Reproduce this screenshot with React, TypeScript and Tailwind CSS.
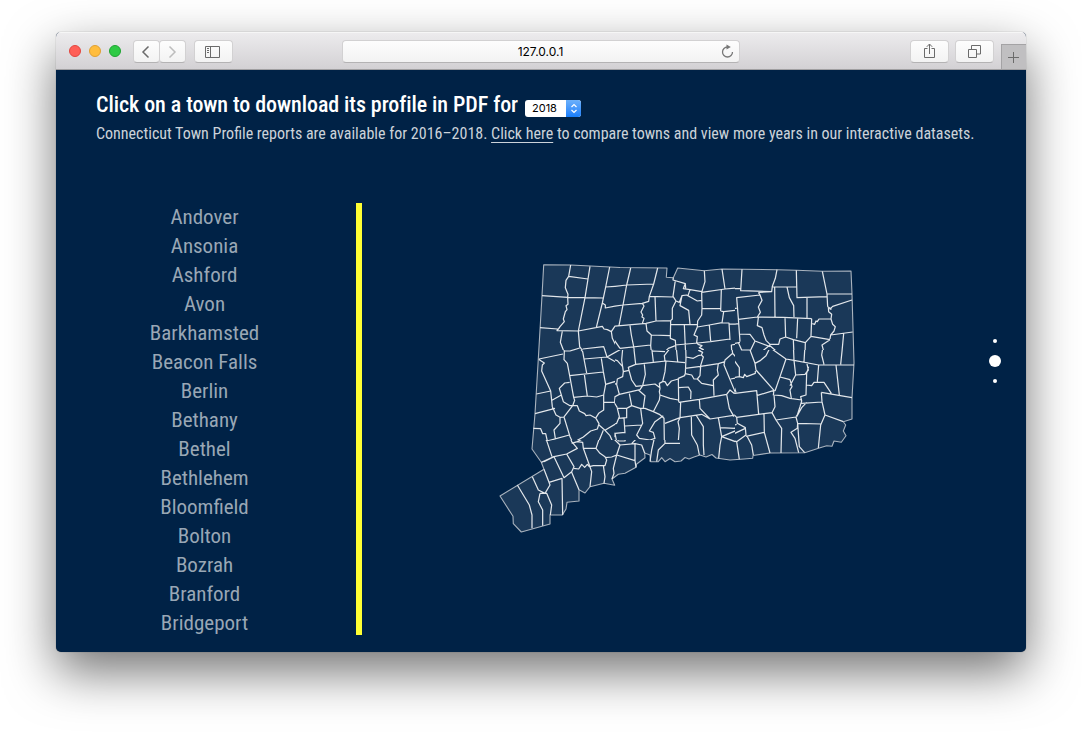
import React from "react";

const towns = [
  "Andover", "Ansonia", "Ashford", "Avon", "Barkhamsted", "Beacon Falls", "Berlin", "Bethany",
  "Bethel", "Bethlehem", "Bloomfield", "Bolton", "Bozrah", "Branford", "Bridgeport",
];

const button =
  "flex h-[23px] items-center justify-center border border-[#d2d1d2] border-b-[#b4b3b4] bg-gradient-to-b from-[#fdfdfd] to-[#f3f3f3] text-[#6b6b6b]";

function Toolbar() {
  return (
    <header className="flex h-[38px] shrink-0 items-start border-b border-[#a09fa1] bg-gradient-to-b from-[#edecee] to-[#d3d1d4] pt-[8px] shadow-[inset_0_1px_0_#f6f6f6]">
      <div className="ml-[13px] mt-[5px] flex gap-2">
        <span className="size-3 rounded-full border border-[#e2463f] bg-[#ff5f57]" />
        <span className="size-3 rounded-full border border-[#e0a032] bg-[#ffbd3e]" />
        <span className="size-3 rounded-full border border-[#1fa432] bg-[#2fca45]" />
      </div>
      <div className="ml-3 flex">
        <div className={`${button} w-[27px] rounded-[4px] pr-px`}>
          <svg width="10" height="14" viewBox="0 0 10 14" fill="none" stroke="currentColor" strokeWidth="1.5"><path d="M7.5 1.5 2 7l5.500 5.500" /></svg>
        </div>
        <div className={`${button} -ml-px w-[27px] rounded-[4px] pr-px`}>
          <svg width="10" height="14" viewBox="0 0 10 14" fill="none" stroke="#bdbdbd" strokeWidth="1.5"><path d="M2.500 1.500 8 7l-5.500 5.500" /></svg>
        </div>
      </div>
      <div className={`${button} ml-2 w-[39px] rounded pr-px`}>
        <svg width="16" height="12" viewBox="0 0 16 12" fill="none" stroke="currentColor"><path d="M.5.5h14v11H.5zM5.500.5v11M2 2.500h2M2 4.500h2M2 6.500h2" /></svg>
      </div>
      <div className={`${button} relative ml-[109px] w-[398px] rounded pr-px text-[12px] text-black`}>
        <span className="font-['Inter',sans-serif] tracking-[0px]">127.0.0.1</span>
        <svg className="absolute right-[5px] top-[3px]" width="13" height="14" viewBox="0 0 13 14" fill="none" stroke="#777"><path d="M6.500 3A5 5 0 1 0 11.500 8" strokeWidth="1.300" /><path d="M5.500.6 9.800 3 5.500 5.600z" fill="#777" stroke="none" /></svg>
      </div>
      <div className={`${button} ml-[170px] w-[39px] rounded`}>
        <svg className="-mt-px" width="13" height="16" viewBox="0 0 13 16" fill="none" stroke="currentColor"><path d="M4.500 5.500h-3v9h10v-9h-3M6.500 11V1.200M3.800 3.800 6.500 1l2.700 2.800" /></svg>
      </div>
      <div className={`${button} ml-[6px] w-[39px] rounded`}>
        <svg className="-mt-px" width="13" height="13" viewBox="0 0 13 13" fill="none" stroke="currentColor"><path d="M.5 4.500h8v8h-8zM3.500 4V.5h9v8.500H9" /></svg>
      </div>
      <div className="ml-auto mt-[4px] flex h-[25px] w-[25px] items-center justify-center border-l border-t border-[#a4a3a5] bg-[#c0bfc1] pr-[2px]">
        <svg width="11" height="11" viewBox="0 0 11 11" stroke="#6b6b6b"><path d="M5.500 0v11M0 5.500h11" /></svg>
      </div>
    </header>
  );
}

const outline =
  "M543.700 264.700 570.700 265 620 267.500 667 268 666.300 277.300 673.300 277.700 677.700 268 704.300 270.700 722 269 777 269.700 796.300 270.300 822.300 271.300 851 271 852 294 854 363 852 397.700 852 419 843.300 421.700 845.700 425 843.300 431 846 435.700 841.300 442.300 834 441 832 446.300 826.700 445.700 819.300 448 804.700 452.700 770 453 753 455.500 752.700 458.300 744 459 730 460 716 458 712 454.500 706 457 700 455 694 457 689 459 685 457.500 681 461 675 461.700 670 458.500 665 461.700 661.700 457.700 658.300 461.700 650.700 461.700 650 455 644.700 453 645 457.700 636.700 464 636 467.300 625 473.300 618.300 474.300 612 479 614.700 485.300 604 483.300 590 486.700 585 493 579 489.700 579 501 567 502.300 566 509 562.300 515 550 515 550 524 521.300 532 513.300 523.700 513 516.300 500 496 544 469.300 541.300 462.300 532 449 535 413.700 538.300 359 542 295.700Z";

// Boundary lines by map tile; each tile has its own origin, three units to a pixel, and a clip area in map pixels.
const tiles = [
  { x: 490, y: 255, clip: "M490 255H615V350H490Z", d: "M242 30 236 64 228 76 226 98 234 118 233 127 234 148 228 152 231 164 226 170 220 192 223 200 210 215 204 224M236 64 294 72M300 34 294 72 285 128 265 228M359 36 347 96 337 144 319 217M156 122 234 127 285 128 341 129M347 96 390 93M337 144 346 150 346 159 390 151M150 218 203 222 201 227 265 228 337 214 342 222 352 224 364 230 375 213 390 211M217 228 211 262 220 285 223 300M265 228 269 275 280 290M364 230 367 250 376 268 390 280M198 300 222 289 240 288 269 279M278 282 341 275 350 300" },
  { x: 610, y: 255, clip: "M615 255H735V350H615Z", d: "M62 39 50 90 39 150 27 212M-2 96 50 90 131 87M143 39 131 87 118 124 116 139 97 145 102 153 93 171 98 180 96 186 102 190 97 206M-2 156 39 150 97 145M118 124 189 126M135 124 138 198M190 68 189 75 226 86 224 90 220 101 240 104 276 110M196 76 189 124 198 138 187 160 187 192 182 197 138 198 108 205 11 214 3 228 6 245 30 280M198 138 208 142 216 122 230 120 240 126M216 122 210 152 236 166 240 208M226 86 227 100M240 104 234 122 262 138 275 136M283 47 285 80 275 112 276 160 275 180 263 198 262 216 252 240 262 245 260 262 264 268M336 42 345 102M275 112 345 102 390 98M334 104 332 168M275 161 332 161M332 168 341 170 382 165M341 170 336 204 357 204 360 255M60 212 64 240 71 275 75 300M108 205 111 228 124 240 122 272 125 300M124 240 180 242M182 197 181 250 196 256 199 300M182 209 262 209M223 209 227 300M262 216 298 210 336 203M298 210 302 258M30 280 122 270M195 270 264 264 302 260 360 252M125 286 165 290 175 280 196 272M264 268 276 272 268 278 280 284 266 290 278 294 268 300M357 207 390 208M386 266 364 270 366 300" },
  { x: 730, y: 255, clip: "M735 255H860V350H735Z", d: "M36 43 32 107 125 110 127 94 136 70 141 44M-2 102 32 100M127 96 201 96M199 46 201 128 291 125M277 49 291 117 293 155M291 117 366 117M134 96 135 185M171 96 178 128 191 152 192 186M231 128 231 188M125 110 85 112M85 112 90 120 20 128 25 190 30 260M90 120 96 136 85 156 91 172 82 186M25 193 82 186 160 187 245 191M293 155 305 163M299 163 308 154 366 135M295 155 296 170 305 178 303 192 267 192 262 200 258 198 254 208 247 206M303 192 308 208 316 215 312 228 302 240 300 252M245 191 243 244 300 254M302 240 368 231M341 236 335 300M165 187 167 246M203 190 200 250M167 246 190 254 226 263 243 244M85 188 82 212 96 218 102 240 108 256 120 268 146 268 150 252 167 246M190 254 192 300M226 263 225 300M300 254 276 270 280 285 274 300M30 237 60 238 75 258 120 275M75 258 62 285 64 300M-2 160 20 160M-2 210 26 206M-2 268 30 262M26 265 35 285 60 285M120 270 95 290 90 300M120 272 152 300" },
  { x: 490, y: 345, clip: "M490 350H615V440H490Z", d: "M147 42 219 27M219 0 223 20 222 44 232 55 239 92 251 157M222 17 240 18 269 9 278 20 282 42 351 36M266 0 269 9M278 9 341 4 351 36M351 36 394 12M351 36 372 48 385 55 388 65M282 42 290 84M334 40 340 80 347 118 341 150 341 195 326 205 318 218M239 92 340 81M283 88 292 154M251 157 292 153 320 156 341 150M347 118 380 108 390 100M341 172 374 172 375 155 380 150 385 130 380 110M374 172 380 190 390 195M147 42 150 46 163 54 157 60 155 78 182 138 187 185 198 210 210 217 222 216 248 182M139 147 182 138M135 206 195 190M186 166 214 150 208 130 224 114 239 112M214 150 220 170 240 182 262 182 268 198 284 206 288 212 300 210 318 220M251 157 254 166 248 182M318 220 327 236 322 252 302 258 280 276 262 286 248 292M222 216 240 275 248 292M210 217 210 235 192 255 196 280M172 288 238 270M130 250 152 251 158 266 167 266 172 288M327 240 345 256 360 272 368 290M345 256 384 232 382 190M340 256 326 290M390 262 375 264 375 275 390 282" },
  { x: 610, y: 345, clip: "M615 350H735V470H680V440H615Z", d: "M34 12 71 5 124 0 130 50M71 5 77 58M30 5 38 12 35 45 40 80 38 95 22 102 20 118 28 148 15 155 12 172 22 188M-9 36 22 47 38 65 40 80 57 76 55 67 77 58 130 52 168 48 225 53M-9 36 34 12M128 18 165 20M165 48 163 32 180 10 198 0 203 50M227 0 228 40 226 85M270 0 268 8 276 12 266 16 278 22 274 30 264 32 250 40 228 36M274 30 280 36 270 68M225 70 272 64 325 56 345 50M272 64 270 92 262 102 275 115 310 122M225 86 245 90 252 102 262 102M225 86 224 92 205 100 206 170M206 128 235 126 243 140 242 162M168 48 165 80 158 110 165 110 172 122 184 108 205 102M158 110 148 115 150 130 148 140 150 150 180 160 205 165M103 58 106 88 98 122M57 76 65 105 78 124 98 122 135 117 150 128M20 116 0 120M28 148 90 134 98 122M86 136 105 152 100 188M58 146 65 182 90 190 105 190 130 200M150 150 148 165 130 200 148 208 162 220 163 290M65 182 50 190 22 190 28 215 20 235 2 240M50 190 50 218 25 220M92 190 95 215 98 235 80 270 88 280 120 285 135 280 130 262 118 258 135 230 160 212M42 220 45 265M45 243 95 240M206 172 268 163 350 148 360 135 372 145 390 142M212 172 210 218M165 235 210 218 275 208 300 222 378 210M268 163 270 190 300 222M350 148 358 190 372 215M210 218 204 230 208 250 204 300M244 215 245 270 262 300M258 210 280 245 280 300M325 218 335 275 330 300M325 56 322 75 325 90 310 105 312 152M364 0 368 25 345 45 342 60 376 142M368 25 388 48M362 102 390 96M330 248 375 250 382 235 390 230M335 275 390 295M335 275 380 256M0 272 15 265 45 262M15 265 20 290 45 290M204 300 206 335M262 300 268 330M280 300 282 330M330 300 326 340" },
  { x: 730, y: 345, clip: "M735 350H860V470H735Z", d: "M372 60 318 60 266 60 192 46 168 42 120 8M190 0 192 46M225 0 222 50M280 0 275 30 282 58M338 0 332 58M120 8 108 32 92 46 75 55M60 15 75 55 78 75 132 136M28 0 35 15 62 15 66 0M0 0 8 40 28 68 28 95 40 98 44 88 50 95 76 85 76 78M0 100 28 95M5 102 18 142M0 147 80 137 86 208M80 152 132 136 130 150 155 152 180 160 215 165M168 42 150 95 135 138M150 96 180 104 186 125 180 135 184 160M192 46 197 90 180 122M197 90 225 88 235 75 230 52M236 65 230 85 228 150 212 155 215 168 210 185 202 210 198 215M228 120 245 122 252 112 282 112 304 145M266 60 262 110M318 60 328 150M274 142 366 158M274 142 276 170 285 210 272 240 265 309M215 175 276 171M230 172 215 188 200 215M285 210 340 230M132 150 135 185 126 203 138 225 198 216M20 217 126 203M102 208 103 262M138 225 155 250 153 324M198 216 203 235 275 237M203 235 202 250 183 262 195 280 206 323M203 235 208 305 224 323M0 197 20 217 22 235 46 248 48 270 20 290 0 285M0 272 46 250M48 274 103 262 120 324M20 238 0 245M20 290 28 343M52 275 65 300 70 330" },
  { x: 490, y: 435, clip: "M490 440H680V540H490Z", d: "M154 82 192 65 230 57 262 40 245 20 238 0M170 17 240 2M158 0 170 17 186 65M192 65 162 80M162 103 177 142 216 130 218 240M192 65 222 128 245 110 252 95 230 57M252 100 266 102 275 88 284 97 292 88 298 95 310 92 345 92 350 75 345 65 330 55 318 40 280 40 298 90M262 20 245 25M262 20 278 22 280 40M262 20 290 5M318 40 328 10 340 0M245 112 267 164M298 90 305 110 300 155M340 92 345 125 342 145M345 68 365 66 380 60 370 100 372 115 366 132M360 0 390 30 380 60 435 77 438 97M390 30 435 26 435 77M435 26 455 30 464 54M375 0 385 18 405 18 408 0M425 26 445 5M450 10 492 14 485 45 480 80M492 14 510 8M500 80 505 45 525 25 570 25M525 25 524 0M82 150 118 210 126 240 126 280M127 125 145 165 165 175 180 150 177 142M150 175 145 200 158 225 158 272M150 175 170 175 185 210 181 240" },
];

function TownMap() {
  return (
    <svg className="block" width="364" height="277" viewBox="495 260 364 277" fill="none" strokeLinejoin="round">
      <path d={outline} fill="#1a3858" stroke="#a9b3be" strokeWidth="1.1" />
      {tiles.map((t, i) => (
        <g key={i} clipPath={`url(#tile-${i})`}>
          <clipPath id={`tile-${i}`}><path d={t.clip} /></clipPath>
          <g transform={`translate(${t.x} ${t.y}) scale(.33333)`}>
            <path d={t.d} stroke="#e2e6ea" strokeWidth="3.700" />
          </g>
        </g>
      ))}
    </svg>
  );
}

export default function App() {
  return (
    <main className="h-[732px] w-[1082px] overflow-hidden bg-white px-14 pt-8 font-['Roboto_Condensed','Roboto',sans-serif]">
      <div className="flex h-[620px] w-[970px] flex-col overflow-hidden rounded-[5px] bg-[#002246] shadow-[0_20px_50px_rgba(0,0,0,0.55),0_0_1px_rgba(0,0,0,0.5)]">
        <Toolbar />
        <section className="h-[133px] pl-10 pt-[19px]">
          <div className="flex h-8 items-center">
            <h1 className="w-[421px] whitespace-nowrap text-[22px] leading-8 font-medium tracking-[-0.07px] text-white">Click on a town to download its profile in PDF for</h1>
            <div className="ml-2 mt-[6px] flex h-[17px] w-[56px] items-center overflow-hidden rounded-[3px] bg-white pl-[7px] font-['Inter',sans-serif] text-[11px] text-black">
              2018
              <span className="ml-auto flex h-full w-[15px] items-center justify-center bg-gradient-to-b from-[#6bb0fa] to-[#157efb]">
                <svg width="8" height="11" viewBox="0 0 8 11" fill="none" stroke="white" strokeWidth="1.200"><path d="m1.500 4 2.500-2.500L6.500 4M1.500 7 4 9.500 6.500 7" /></svg>
              </span>
            </div>
          </div>
          <p className="whitespace-nowrap pt-px text-[16px] leading-6 text-[#ccd3da]">
            Connecticut Town Profile reports are available for 2016–2018. <a className="underline decoration-1 underline-offset-[3px]">Click here</a> to compare towns and view more years in our interactive datasets.
          </p>
        </section>
        <section className="flex">
          <ul className="h-[432px] w-[306px] shrink-0 border-r-[6px] border-[#ffff33] pr-[3px] text-center text-[21px] leading-[29px] text-[#99a7b5]">
            {towns.map((t) => <li key={t}>{t}</li>)}
          </ul>
          <div className="ml-[133px] mt-[57px] h-[277px] w-[364px]"><TownMap /></div>
          <nav className="ml-[130px] mt-[136px] flex h-[44px] w-3 flex-col items-center justify-between">
            <i className="size-1 rounded-full bg-white" />
            <i className="size-3 rounded-full bg-white" />
            <i className="size-1 rounded-full bg-white" />
          </nav>
        </section>
      </div>
    </main>
  );
}
